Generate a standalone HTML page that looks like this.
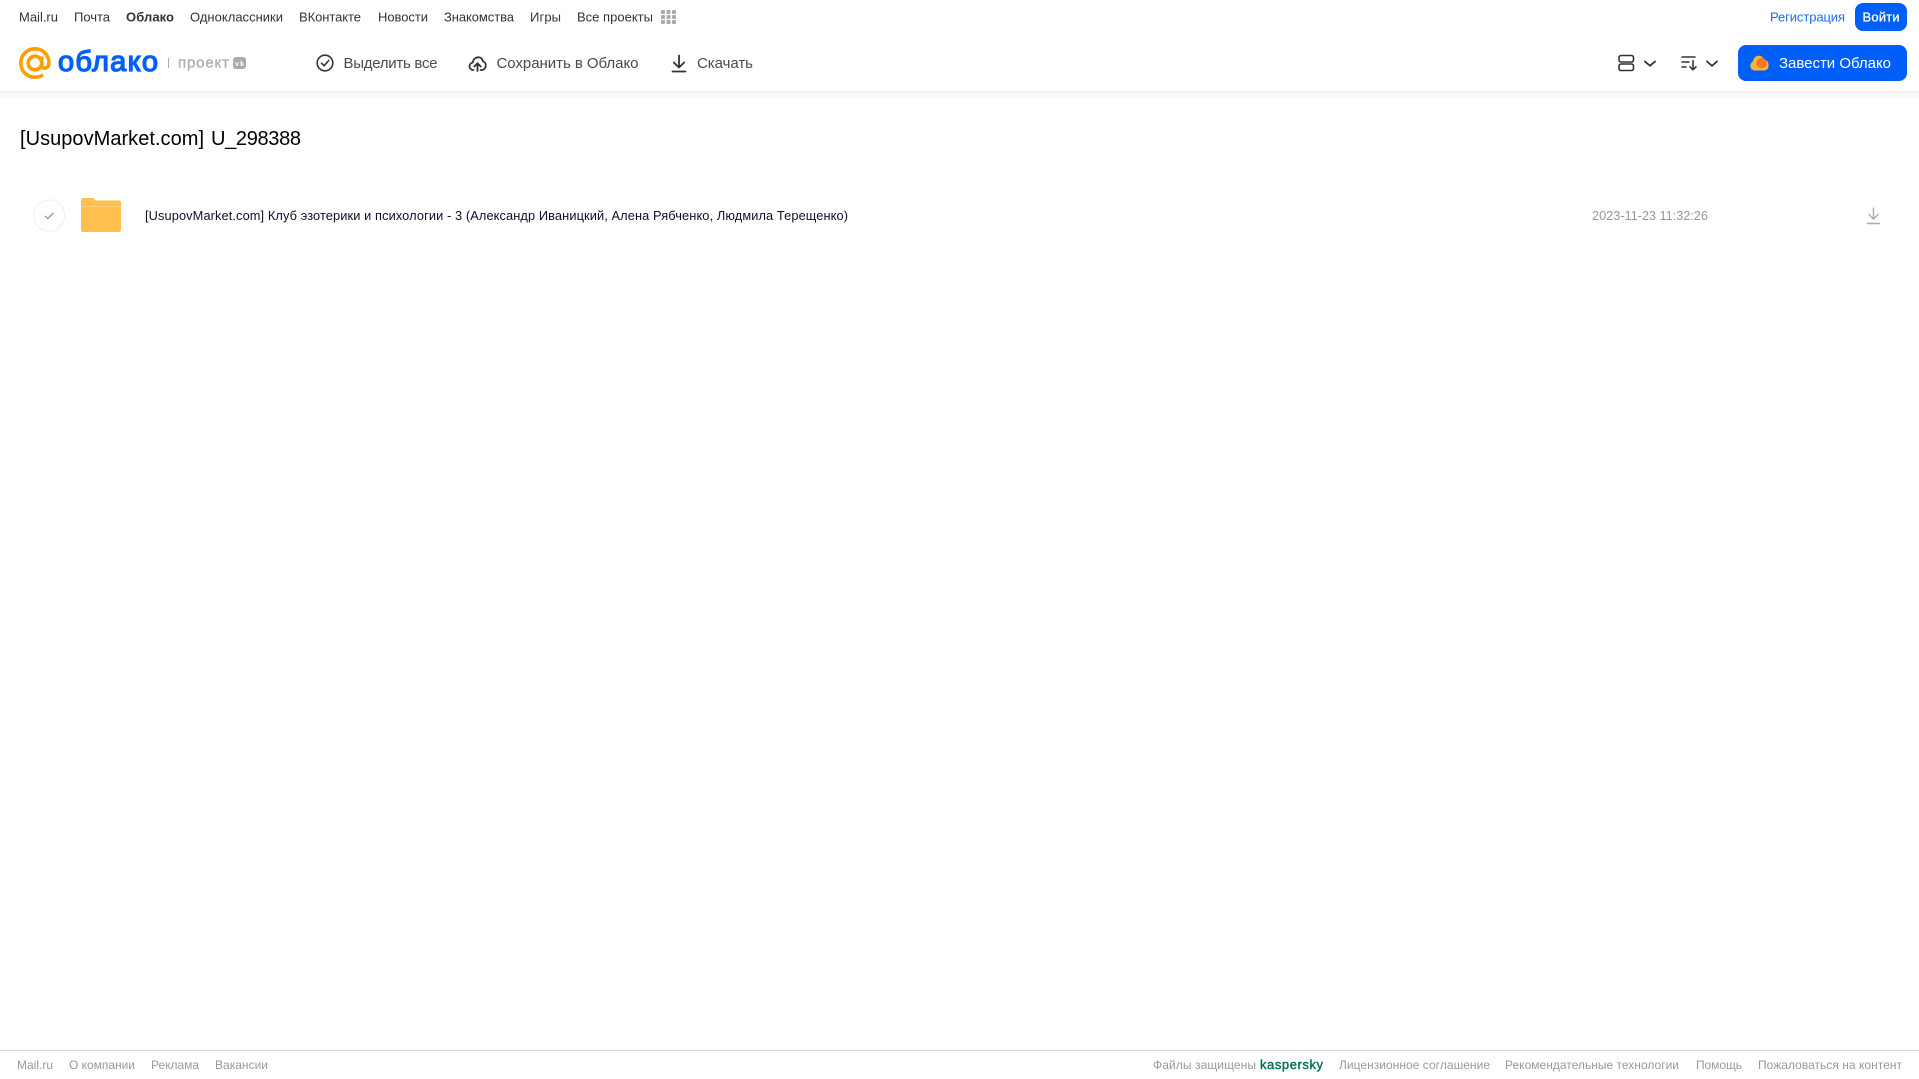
<!DOCTYPE html>
<html lang="ru">
<head>
<meta charset="utf-8">
<title>Облако</title>
<style>
html,body{margin:0;padding:0;width:1919px;height:1079px;overflow:hidden;background:#fff}
svg{display:block;position:absolute;left:0;top:0}
text{font-family:"Liberation Sans",sans-serif}
.n{font-size:13px;fill:#333}
.a{font-size:15px;fill:#4a4a4a}
.f{font-size:12px;fill:#999}
</style>
</head>
<body>
<svg width="1919" height="1079" viewBox="0 0 1919 1079" xmlns="http://www.w3.org/2000/svg">
<defs>
<linearGradient id="sh" x1="0" y1="0" x2="0" y2="1"><stop offset="0" stop-color="#f0f0f0"/><stop offset="1" stop-color="#fff"/></linearGradient>
</defs>
<rect x="0" y="91" width="1919" height="8" fill="url(#sh)"/>

<!-- top nav -->
<text class="n" x="19" y="21.5" textLength="39">Mail.ru</text>
<text class="n" x="74" y="21.5" textLength="36">Почта</text>
<text class="n" x="126" y="21.5" textLength="48" style="font-weight:700">Облако</text>
<text class="n" x="190" y="21.5" textLength="93">Одноклассники</text>
<text class="n" x="299" y="21.5" textLength="62">ВКонтакте</text>
<text class="n" x="378" y="21.5" textLength="50">Новости</text>
<text class="n" x="444" y="21.5" textLength="70">Знакомства</text>
<text class="n" x="530" y="21.5" textLength="31">Игры</text>
<text class="n" x="577" y="21.5" textLength="76">Все проекты</text>
<g fill="#aaa">
<rect x="661" y="10" width="4" height="4" rx="1"/><rect x="666.500" y="10" width="4" height="4" rx="1"/><rect x="672" y="10" width="4" height="4" rx="1"/>
<rect x="661" y="15" width="4" height="4" rx="1"/><rect x="666.500" y="15" width="4" height="4" rx="1"/><rect x="672" y="15" width="4" height="4" rx="1"/>
<rect x="661" y="20" width="4" height="4" rx="1"/><rect x="666.500" y="20" width="4" height="4" rx="1"/><rect x="672" y="20" width="4" height="4" rx="1"/>
</g>
<text class="n" x="1770" y="21.500" textLength="75" style="fill:#1a6fe8">Регистрация</text>
<rect x="1855" y="3" width="52" height="28" rx="8" fill="#005ff9"/>
<text class="n" x="1862.500" y="21.500" textLength="37" style="fill:#fff;stroke:#fff;stroke-width:.3">Войти</text>

<!-- logo -->
<g fill="none" stroke="#ff9e00" stroke-width="3.600">
<circle cx="35" cy="63" r="6.800"/>
<path d="M41.800 56.500V65.500C41.800 69.500 48.900 69.500 48.900 63C48.900 54.800 42.800 48.800 35 48.800C27 48.800 20.800 55 20.800 63C20.800 71 27 77.200 35 77.200C38 77.200 40.500 76.500 43 75"/>
</g>
<text x="58" y="71" textLength="100" style="font-size:29px;fill:#005ff9;stroke:#005ff9;stroke-width:1.300">облако</text>
<rect x="168" y="58" width="1" height="10" fill="#aaa"/>
<text x="178" y="67.500" textLength="51" style="font-size:15px;fill:#b0b0b0;stroke:#b0b0b0;stroke-width:.4">проект</text>
<rect x="233" y="57" width="13" height="12" rx="3" fill="#aaa"/>
<text x="235" y="66" textLength="9" style="font-size:7px;font-weight:700;fill:#fff">vk</text>

<!-- actions -->
<g fill="none" stroke="#333" stroke-width="1.600" stroke-linecap="round" stroke-linejoin="round">
<circle cx="325" cy="63" r="7.800"/>
<path d="M321.500 63.200L324.200 65.800L328.700 60.500"/>
<path d="M473.500 70H473C468.500 69.500 468.300 63.500 472.800 62.500C473.500 56 482 55.500 483 61.500C486.800 62 486.800 69.500 482 70H480.500" stroke-width="1.800"/>
<path d="M477.500 71V63.500M474.300 66.500L477.500 63.200L480.700 66.500" stroke-width="1.800"/>
<path d="M679 55.500V67.500M673.800 62.500L679 67.500L684.200 62.500M672.500 71.500H685.500" stroke-width="1.800"/>
</g>
<text class="a" x="343.500" y="68" textLength="94">Выделить все</text>
<text class="a" x="496.500" y="68" textLength="142">Сохранить в Облако</text>
<text class="a" x="697" y="68" textLength="56">Скачать</text>

<!-- view / sort -->
<g fill="none" stroke="#333" stroke-linecap="round" stroke-linejoin="round">
<rect x="1619" y="55.500" width="14.500" height="6.500" rx="2" stroke-width="1.600"/>
<rect x="1619" y="64" width="14.500" height="6.500" rx="2" stroke-width="1.600"/>
<path d="M1645 61.500L1650 65.800L1655 61.500" stroke-width="1.800"/>
<path d="M1682 57H1695M1682 62H1689M1682 67H1686" stroke-width="1.500"/>
<path d="M1693 60.500V69.500M1690 66.800L1693 69.800L1696 66.800" stroke-width="1.500"/>
<path d="M1707 61.500L1712 65.800L1717 61.500" stroke-width="1.800"/>
</g>
<rect x="1738" y="45" width="169" height="36" rx="8" fill="#005ff9"/>
<path d="M1755 70.500C1749.500 70.500 1749 63 1753 61.500C1753.500 55 1762 53.500 1764 59.500C1770 60 1770.500 70.500 1764 70.500Z" fill="#ffb43c"/>
<circle cx="1761.500" cy="63" r="5.200" fill="#f47a20"/>
<text x="1779" y="68" textLength="112" style="font-size:15px;fill:#fff">Завести Облако</text>

<!-- title -->
<text x="20" y="145" textLength="184" style="font-size:20px;fill:#000">[UsupovMarket.com]</text>
<text x="211" y="145" textLength="90" style="font-size:20px;fill:#000">U_298388</text>

<!-- row -->
<circle cx="49" cy="215.500" r="15.500" fill="#fff" stroke="#eee"/>
<path d="M44.800 215.800L47.800 218.500L53.300 213" fill="none" stroke="#999" stroke-width="1.300"/>
<path d="M81 200.500C81 199 82 198 83.500 198H92C94 198 94.500 198.800 95.500 200.500H118.500C120 200.500 121 201.500 121 203V229.500C121 231 120 232 118.500 232H83.500C82 232 81 231 81 229.500Z" fill="#ffc04d"/>
<rect x="81" y="206" width="40" height="1" fill="#ffcf78"/>
<text x="145" y="220" textLength="703" style="font-size:12.800px;fill:#1a0a2a">[UsupovMarket.com] Клуб эзотерики и психологии - 3 (Александр Иваницкий, Алена Рябченко, Людмила Терещенко)</text>
<text x="1592" y="220" textLength="116" style="font-size:12.800px;fill:#999">2023-11-23 11:32:26</text>
<path d="M1873.500 207.500V219M1868.500 214L1873.500 219L1878.500 214M1867 223.500H1880" fill="none" stroke="#aaa" stroke-width="1.400"/>

<!-- footer -->
<rect x="0" y="1050" width="1919" height="1" fill="#d9d9d9"/>
<text class="f" x="17" y="1069" textLength="36">Mail.ru</text>
<text class="f" x="69" y="1069" textLength="66">О компании</text>
<text class="f" x="151" y="1069" textLength="48">Реклама</text>
<text class="f" x="215" y="1069" textLength="53">Вакансии</text>
<text class="f" x="1153" y="1069" textLength="103">Файлы защищены</text>
<text x="1260" y="1069" textLength="63" style="font-size:13px;fill:#00705a;stroke:#00705a;stroke-width:.4">kaspersky</text>
<text class="f" x="1339" y="1069" textLength="151">Лицензионное соглашение</text>
<text class="f" x="1505" y="1069" textLength="174">Рекомендательные технологии</text>
<text class="f" x="1696" y="1069" textLength="46">Помощь</text>
<text class="f" x="1758" y="1069" textLength="144">Пожаловаться на контент</text>
</svg>
</body>
</html>
